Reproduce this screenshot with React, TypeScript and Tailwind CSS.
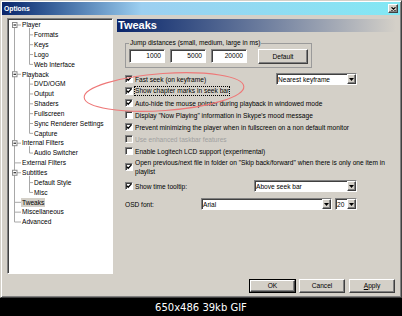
import React from "react";

const raised =
  "border border-t-white border-l-white border-r-[#404040] border-b-[#404040] shadow-[inset_-1px_-1px_0_#808080] bg-[#d4d0c8]";
const sunken =
  "border border-t-[#808080] border-l-[#808080] border-r-white border-b-white shadow-[inset_1px_1px_0_#404040]";

function Check({ checked, disabled }: { checked?: boolean; disabled?: boolean }) {
  return (
    <span
      className={`w-[8px] h-[8px] shrink-0 flex items-center justify-center ${sunken} ${
        disabled ? "bg-[#d4d0c8]" : "bg-white"
      }`}
    >
      {checked && (
        <svg width="6" height="6" viewBox="0 0 6 6">
          <path d="M0.6 2.6 L2.2 4.3 L5.4 0.9" stroke="black" strokeWidth="1.3" fill="none" />
        </svg>
      )}
    </span>
  );
}

function Combo({ className, text }: { className: string; text: string }) {
  return (
    <div className={`h-[12px] bg-white flex items-center ${sunken} ${className}`}>
      <span className="flex-1 pl-[1px] leading-[9px] whitespace-nowrap overflow-hidden">{text}</span>
      <span className={`w-[9px] h-[10px] shrink-0 flex items-center justify-center ${raised}`}>
        <svg width="5" height="3" viewBox="0 0 5 3">
          <path d="M0 0 H5 L2.5 3 Z" fill="black" />
        </svg>
      </span>
    </div>
  );
}

function Edit({ value }: { value: string }) {
  return (
    <div className={`w-[36px] h-[14px] bg-white flex items-center justify-end pr-[3px] ${sunken}`}>
      {value}
    </div>
  );
}

const tree: [string, number, boolean?][] = [
  ["Player", 0, true],
  ["Formats", 1],
  ["Keys", 1],
  ["Logo", 1],
  ["Web Interface", 1],
  ["Playback", 0, true],
  ["DVD/OGM", 1],
  ["Output", 1],
  ["Shaders", 1],
  ["Fullscreen", 1],
  ["Sync Renderer Settings", 1],
  ["Capture", 1],
  ["Internal Filters", 0, true],
  ["Audio Switcher", 1],
  ["External Filters", 0],
  ["Subtitles", 0, true],
  ["Default Style", 1],
  ["Misc", 1],
  ["Tweaks", 0],
  ["Miscellaneous", 0],
  ["Advanced", 0],
];

const cy = (i: number) => 6.0 + 9.85 * i;

function TreeLines() {
  const groups: [number, number][] = [
    [0, 4],
    [5, 11],
    [12, 13],
    [15, 17],
  ];
  const lc = "#a8a8a8";
  return (
    <svg className="absolute left-0 top-0 pointer-events-none" width="104" height="254">
      <line x1="6.5" y1={cy(0)} x2="6.5" y2={cy(20)} stroke={lc} strokeWidth="1" />
      {groups.map(([p, last]) => (
        <line key={p} x1="21.5" y1={cy(p) + 3} x2="21.5" y2={cy(last)} stroke={lc} strokeWidth="1" />
      ))}
      {tree.map(([, lvl, box], i) =>
        lvl === 0 ? (
          <line key={"h" + i} x1={box ? 9 : 6.5} y1={cy(i)} x2="13" y2={cy(i)} stroke={lc} strokeWidth="1" />
        ) : (
          <line key={"h" + i} x1="21.5" y1={cy(i)} x2="25" y2={cy(i)} stroke={lc} strokeWidth="1" />
        )
      )}
      {tree.map(([, , box], i) =>
        box ? (
          <g key={"b" + i}>
            <rect x="4.5" y={cy(i) - 2.5} width="4.5" height="5" fill="white" stroke="#8c8c8c" strokeWidth="1" />
            <line x1="5.5" y1={cy(i)} x2="8" y2={cy(i)} stroke="black" strokeWidth="1" />
          </g>
        ) : null
      )}
    </svg>
  );
}

export default function App() {
  return (
    <div className="relative w-[402px] h-[316px] bg-black flex flex-col font-['Liberation_Sans',Arial,sans-serif] text-[6.6px] text-black">
      <div className="h-[298px] shrink-0 bg-[#d4d0c8] flex flex-col border border-t-[#d4d0c8] border-l-[#d4d0c8] border-r-[#404040] border-b-[#404040] shadow-[inset_1px_1px_0_#fff,inset_-1px_-1px_0_#808080]">
        {/* title bar */}
        <div className="mt-[1px] mx-[1px] h-[13px] flex items-center justify-between pl-[2px] pr-[2px] bg-linear-to-r from-[#0a246a] via-[#9ccff0] via-35% to-[#82e8f4]">
          <span className="text-white font-bold text-[6.8px] leading-[9px]">Options</span>
          <span className={`w-[10px] h-[9px] flex items-center justify-center ${raised}`}>
            <svg width="5" height="4" viewBox="0 0 5 4">
              <path d="M0.5 0.3 L4.5 3.7 M4.5 0.3 L0.5 3.7" stroke="black" strokeWidth="1.1" />
            </svg>
          </span>
        </div>

        {/* body */}
        <div className="mt-[3px] flex pl-[6px]">
          {/* tree */}
          <div className={`relative w-[106px] h-[256px] bg-white ${sunken}`}>
            <TreeLines />
            <div className="pt-[1.1px] flex flex-col">
              {tree.map(([label, lvl], i) => (
                <div key={label} className={`h-[9.85px] flex items-center ${lvl === 0 ? "pl-[13px]" : "pl-[25px]"}`}>
                  <span className={`px-[1px] leading-[9.3px] whitespace-nowrap ${label === "Tweaks" ? "bg-[#d4d0c8]" : ""}`}>
                    {label}
                  </span>
                </div>
              ))}
            </div>
          </div>

          {/* right pane */}
          <div className="ml-[4px] w-[279px] flex flex-col">
            <div className="mt-[1px] h-[13px] flex items-center pl-[1px] bg-linear-to-r from-[#0a246a] to-[#d4d0c8] text-white font-bold text-[11px] leading-[13px]">
              Tweaks
            </div>

            <fieldset className="mt-[7px] ml-[8px] w-[187px] border border-[#9a9a9a] px-[3px] pt-[2px] pb-[3px]">
              <legend className="px-[1px] leading-[8px] whitespace-nowrap">Jump distances (small, medium, large in ms)</legend>
              <div className="flex items-start">
                <Edit value="1000" />
                <div className="ml-[5px]">
                  <Edit value="5000" />
                </div>
                <div className="ml-[5px]">
                  <Edit value="20000" />
                </div>
                <button className={`ml-[11px] w-[50px] h-[15px] flex items-center justify-center ${raised}`}>Default</button>
              </div>
            </fieldset>

            <div className="mt-[5px] pl-[8px] flex flex-col leading-[9px]">
              <div className="h-[12px] flex items-center">
                <div className="w-[151px] flex items-center gap-[2px]">
                  <Check checked />
                  <span className="whitespace-nowrap">Fast seek (on keyframe)</span>
                </div>
                <Combo className="w-[81px]" text="Nearest keyframe" />
              </div>
              <div className="h-[12px] flex items-center gap-[2px]">
                <Check checked />
                <span className="-ml-[1px] border border-dotted border-black leading-[8px] whitespace-nowrap">
                  Show chapter marks in seek bar
                </span>
              </div>
              <div className="h-[12px] flex items-center gap-[2px]">
                <Check checked />
                <span className="whitespace-nowrap">Auto-hide the mouse pointer during playback in windowed mode</span>
              </div>
              <div className="h-[12px] flex items-center gap-[2px]">
                <Check />
                <span className="whitespace-nowrap">Display "Now Playing" information in Skype's mood message</span>
              </div>
              <div className="h-[12px] flex items-center gap-[2px]">
                <Check checked />
                <span className="whitespace-nowrap">Prevent minimizing the player when in fullscreen on a non default monitor</span>
              </div>
              <div className="h-[12px] flex items-center gap-[2px]">
                <Check disabled />
                <span className="whitespace-nowrap text-[#a0a0a0]">Use enhanced taskbar features</span>
              </div>
              <div className="h-[12px] flex items-center gap-[2px]">
                <Check />
                <span className="whitespace-nowrap">Enable Logitech LCD support (experimental)</span>
              </div>
              <div className="h-[20px] flex items-center gap-[2px]">
                <Check checked />
                <span className="w-[261px]">
                  Open previous/next file in folder on "Skip back/forward" when there is only one item in playlist
                </span>
              </div>
              <div className="mt-[3px] h-[12px] flex items-center">
                <div className="w-[129px] flex items-center gap-[2px]">
                  <Check checked />
                  <span className="whitespace-nowrap">Show time tooltip:</span>
                </div>
                <Combo className="w-[103px]" text="Above seek bar" />
              </div>
              <div className="mt-[6px] h-[12px] flex items-center">
                <span className="w-[76px] whitespace-nowrap">OSD font:</span>
                <Combo className="w-[131px]" text="Arial" />
                <Combo className="ml-[3px] w-[22px]" text="20" />
              </div>
            </div>
          </div>
        </div>

        {/* buttons */}
        <div className="mt-[5px] flex justify-end pr-[6px]">
          <button className="w-[47px] h-[14px] border border-black flex">
            <span className={`flex-1 flex items-center justify-center ${raised}`}>OK</span>
          </button>
          <button className={`ml-[3px] w-[46px] h-[14px] flex items-center justify-center ${raised}`}>Cancel</button>
          <button className={`ml-[4px] w-[46px] h-[14px] flex items-center justify-center ${raised}`}>
            <span>
              <span className="underline">A</span>pply
            </span>
          </button>
        </div>
      </div>

      {/* footer */}
      <div className="flex-1 flex items-center justify-center text-white font-['DejaVu_Sans',sans-serif] text-[10px]">
        650x486 39kb GIF
      </div>

      {/* red annotation ellipse */}
      <svg className="absolute left-0 top-0 pointer-events-none" width="402" height="316">
        <ellipse
          cx="164"
          cy="92"
          rx="80"
          ry="18.5"
          transform="rotate(-4 164 92)"
          fill="none"
          stroke="#ee7878"
          strokeWidth="1.1"
        />
      </svg>
    </div>
  );
}
